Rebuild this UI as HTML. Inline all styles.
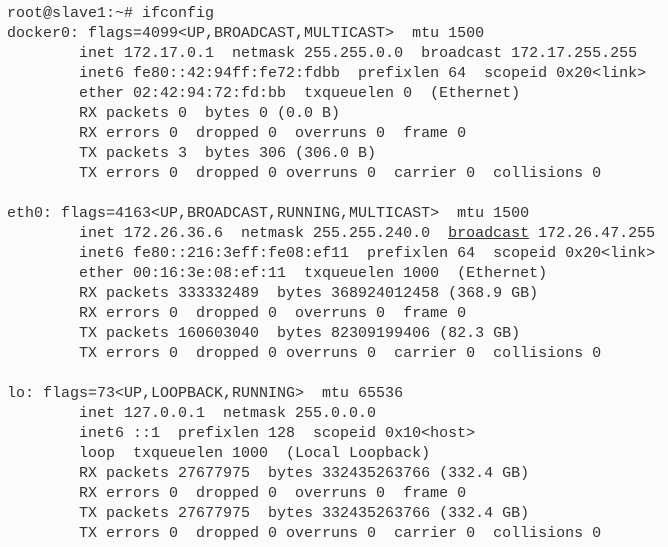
<!DOCTYPE html>
<html><head><meta charset="utf-8"><style>
html,body{margin:0;padding:0;background:#fbfbfb;width:668px;height:547px;overflow:hidden}
pre{margin:0;position:absolute;left:7px;top:4px;font-family:"Liberation Mono",monospace;font-size:15px;line-height:20px;color:#333;letter-spacing:0px}
u{text-decoration:underline}
</style></head><body><pre>root@slave1:~# ifconfig
docker0: flags=4099&lt;UP,BROADCAST,MULTICAST&gt;  mtu 1500
        inet 172.17.0.1  netmask 255.255.0.0  broadcast 172.17.255.255
        inet6 fe80::42:94ff:fe72:fdbb  prefixlen 64  scopeid 0x20&lt;link&gt;
        ether 02:42:94:72:fd:bb  txqueuelen 0  (Ethernet)
        RX packets 0  bytes 0 (0.0 B)
        RX errors 0  dropped 0  overruns 0  frame 0
        TX packets 3  bytes 306 (306.0 B)
        TX errors 0  dropped 0 overruns 0  carrier 0  collisions 0

eth0: flags=4163&lt;UP,BROADCAST,RUNNING,MULTICAST&gt;  mtu 1500
        inet 172.26.36.6  netmask 255.255.240.0  <u>broadcast</u> 172.26.47.255
        inet6 fe80::216:3eff:fe08:ef11  prefixlen 64  scopeid 0x20&lt;link&gt;
        ether 00:16:3e:08:ef:11  txqueuelen 1000  (Ethernet)
        RX packets 333332489  bytes 368924012458 (368.9 GB)
        RX errors 0  dropped 0  overruns 0  frame 0
        TX packets 160603040  bytes 82309199406 (82.3 GB)
        TX errors 0  dropped 0 overruns 0  carrier 0  collisions 0

lo: flags=73&lt;UP,LOOPBACK,RUNNING&gt;  mtu 65536
        inet 127.0.0.1  netmask 255.0.0.0
        inet6 ::1  prefixlen 128  scopeid 0x10&lt;host&gt;
        loop  txqueuelen 1000  (Local Loopback)
        RX packets 27677975  bytes 332435263766 (332.4 GB)
        RX errors 0  dropped 0  overruns 0  frame 0
        TX packets 27677975  bytes 332435263766 (332.4 GB)
        TX errors 0  dropped 0 overruns 0  carrier 0  collisions 0</pre></body></html>
